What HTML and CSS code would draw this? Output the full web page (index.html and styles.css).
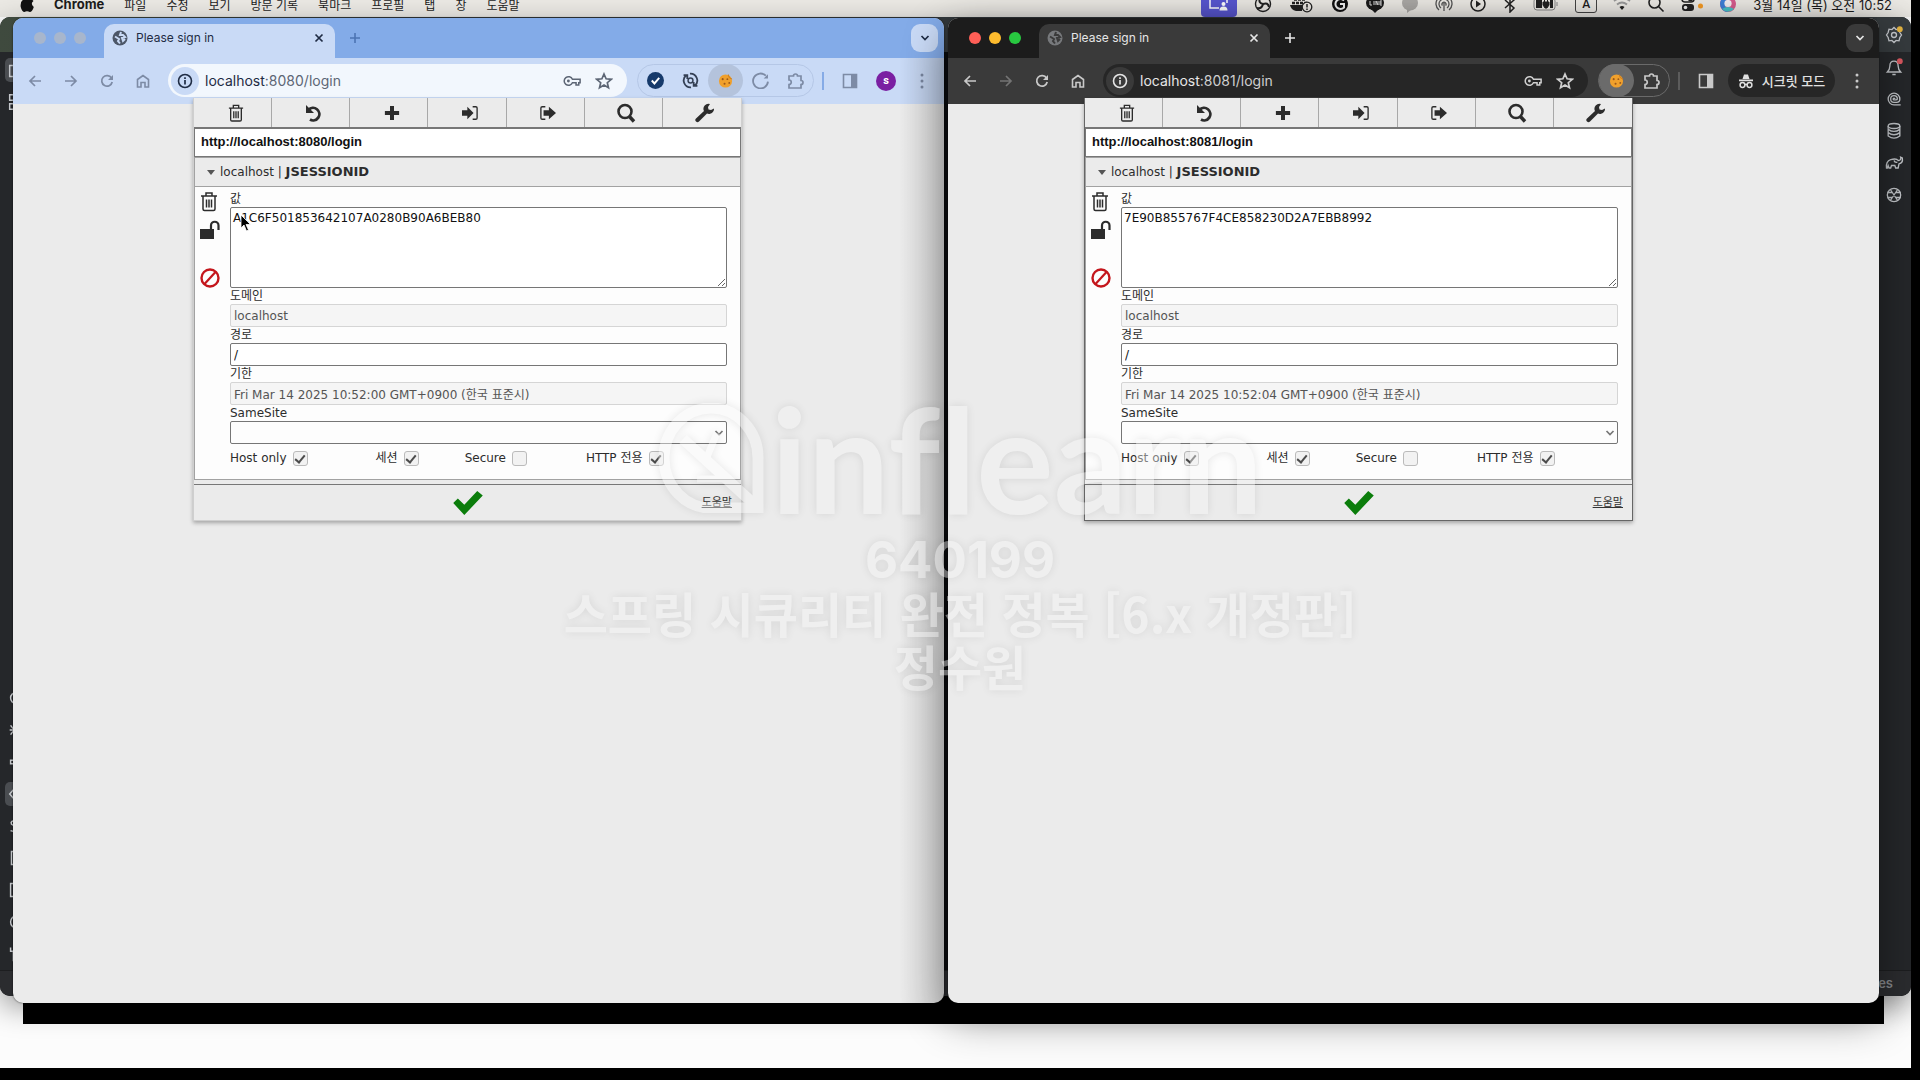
FILE: index.html
```html
<!DOCTYPE html>
<html lang="ko">
<head>
<meta charset="utf-8">
<title>Please sign in</title>
<link rel="stylesheet" href="styles.css">
</head>
<body>
<svg class="sprite" aria-hidden="true">
  <symbol id="i-trash" viewBox="0 0 18 20"><path d="M1 4.500h16M6 4V1.500h6V4M3 5v12.500q0 1.500 1.500 1.500h9q1.500 0 1.500-1.500V5M6.500 8v8M9 8v8M11.500 8v8" fill="none" stroke="currentColor" stroke-width="1.500"/></symbol>
  <symbol id="i-undo" viewBox="0 0 18 18"><path d="M3.500 6A6.200 6.200 0 1 1 5 15.500" fill="none" stroke="currentColor" stroke-width="2.800"/><path d="M1 1v8h8z" fill="currentColor"/></symbol>
  <symbol id="i-plus" viewBox="0 0 18 18"><path d="M9 1v16M1 9h16" stroke="currentColor" stroke-width="4.500"/></symbol>
  <symbol id="i-import" viewBox="0 0 20 18"><path d="M1 6h6V2l7 7-7 7v-4H1z" fill="currentColor"/><path d="M13 2h3.500q1.500 0 1.500 1.500v11q0 1.500-1.500 1.500H13" fill="none" stroke="currentColor" stroke-width="1.500"/></symbol>
  <symbol id="i-export" viewBox="0 0 20 18"><path d="M5 6h6V2l8 7-8 7v-4H5z" fill="currentColor"/><path d="M7 2H3.500Q2 2 2 3.500v11Q2 16 3.500 16H7" fill="none" stroke="currentColor" stroke-width="1.500"/></symbol>
  <symbol id="i-search" viewBox="0 0 20 20"><circle cx="9" cy="8.500" r="6.500" fill="none" stroke="currentColor" stroke-width="2.600"/><path d="m13 13 5 5.500" stroke="currentColor" stroke-width="3.400"/></symbol>
  <symbol id="i-wrench" viewBox="0 0 20 20"><path d="M19 5.500a5 5 0 0 1-7 5L4 18.500a1.800 1.800 0 0 1-3-3l8-7.500a5 5 0 0 1 6-7L13 4l.500 2.500L16 7z" fill="currentColor"/></symbol>
  <symbol id="i-unlock" viewBox="0 0 20 20"><path d="M0 9h14v10H0z" fill="currentColor"/><path d="M11 9V5.500a3.700 3.700 0 0 1 7.500 0V10" fill="none" stroke="currentColor" stroke-width="2.200"/></symbol>
  <symbol id="i-ban" viewBox="0 0 20 20"><circle cx="10" cy="10" r="8.500" fill="none" stroke="#c4161c" stroke-width="2.400"/><path d="M4.500 16 15.500 4" stroke="#c4161c" stroke-width="2.200"/></symbol>
  <symbol id="i-ok" viewBox="0 0 32 26"><path d="M0 13l5-5 7 7L26 0l6 5L12 26z" fill="#0b7d0b"/></symbol>
  <symbol id="i-back" viewBox="0 0 16 16"><path d="M14 8H3M8 3 3 8l5 5" fill="none" stroke="currentColor" stroke-width="1.700"/></symbol>
  <symbol id="i-fwd" viewBox="0 0 16 16"><path d="M2 8h11M8 3l5 5-5 5" fill="none" stroke="currentColor" stroke-width="1.700"/></symbol>
  <symbol id="i-reload" viewBox="0 0 16 16"><path d="M12.500 5A5.300 5.300 0 1 0 13.200 9" fill="none" stroke="currentColor" stroke-width="1.700"/><path d="M14 2v5H9z" fill="currentColor"/></symbol>
  <symbol id="i-home" viewBox="0 0 16 16"><path d="M2.500 6.500 8 2.500l5.500 4V14H10V9.500H6V14H2.500z" fill="none" stroke="currentColor" stroke-width="1.600"/></symbol>
  <symbol id="i-info" viewBox="0 0 16 16"><circle cx="8" cy="8" r="6.500" fill="none" stroke="currentColor" stroke-width="1.600"/><path d="M8 7v4.500M8 4.300v1.600" stroke="currentColor" stroke-width="1.700"/></symbol>
  <symbol id="i-key" viewBox="0 0 20 16"><path d="M10.500 6H19v4h-1.500v2.500h-3V10h-4a4.800 4.800 0 1 1 0-4z" fill="none" stroke="currentColor" stroke-width="1.700"/><circle cx="6" cy="8" r="1.600" fill="currentColor"/></symbol>
  <symbol id="i-star" viewBox="0 0 18 18"><path d="m9 2 2.100 4.800 5.200.500-4 3.400 1.200 5.100L9 13.100l-4.500 2.700 1.200-5.100-4-3.400 5.200-.500z" fill="none" stroke="currentColor" stroke-width="1.700"/></symbol>
  <symbol id="i-globe" viewBox="0 0 16 16"><circle cx="8" cy="8" r="7.500" fill="currentColor"/><path d="M3 6.500 7 9l-1 2 2 2.500M9 2l-1 3h3l2 2-3 1 1 3 2-2" fill="none" stroke="var(--tab)" stroke-width="2"/></symbol>
  <symbol id="i-close" viewBox="0 0 12 12"><path d="m2.500 2.500 7 7M9.500 2.500l-7 7" stroke="currentColor" stroke-width="1.700"/></symbol>
  <symbol id="i-add" viewBox="0 0 12 12"><path d="M6 1v10M1 6h10" stroke="currentColor" stroke-width="1.600"/></symbol>
  <symbol id="i-chev" viewBox="0 0 12 12"><path d="m2.500 4 3.500 3.500L9.500 4" fill="none" stroke="currentColor" stroke-width="1.700"/></symbol>
  <symbol id="i-puzzle" viewBox="0 0 18 18"><path d="M2 4h4.500a2 2 0 0 1 4 0H14v4.500a2 2 0 0 1 0 4V16H2v-3.500a2.200 2.200 0 0 0 0-4.500z" fill="none" stroke="currentColor" stroke-width="1.700"/></symbol>
  <symbol id="i-panel" viewBox="0 0 16 16"><path d="M1.500 1.500h13v13h-13z" fill="none" stroke="currentColor" stroke-width="1.600"/><path d="M9 2h5v12H9z" fill="currentColor"/></symbol>
  <symbol id="i-dots" viewBox="0 0 4 16"><circle cx="2" cy="2" r="1.500" fill="currentColor"/><circle cx="2" cy="8" r="1.500" fill="currentColor"/><circle cx="2" cy="14" r="1.500" fill="currentColor"/></symbol>
  <symbol id="i-cookie" viewBox="0 0 16 16"><circle cx="8" cy="8" r="7" fill="#f0a02c"/><path d="M11 1a5 5 0 0 0 4 5" stroke="#c87a1d" fill="none"/><circle cx="5" cy="6" r="1.100" fill="#9a571a"/><circle cx="10" cy="6" r="1" fill="#9a571a"/><circle cx="7" cy="11" r="1.100" fill="#9a571a"/><circle cx="12" cy="10" r="1" fill="#9a571a"/></symbol>
  <symbol id="i-check" viewBox="0 0 16 16"><circle cx="8" cy="8" r="8" fill="#163a6b"/><path d="m4.500 8 2.500 2.800L11.500 5.500" fill="none" stroke="#fff" stroke-width="1.800"/></symbol>
  <symbol id="i-sync" viewBox="0 0 16 16"><path d="M8.500 14.500A6.500 6.500 0 0 1 4 3M7.500 1.500A6.500 6.500 0 0 1 12 13M1.500 3H5v3.500M14.500 13H11V9.500" fill="none" stroke="currentColor" stroke-width="1.700"/><circle cx="8" cy="8" r="2.300" fill="none" stroke="currentColor" stroke-width="1.400"/></symbol>
  <symbol id="i-arc" viewBox="0 0 16 16"><path d="M13 3.500A7 7 0 1 0 15 9" fill="none" stroke="currentColor" stroke-width="1.700"/><path d="M15 2v4h-4z" fill="currentColor"/></symbol>
  <symbol id="i-spy" viewBox="0 0 16 16"><path d="M4.500 6 6 1.500h4L11.500 6zM1 6.500h14v1.700H1z" fill="currentColor"/><circle cx="4.500" cy="12" r="2.400" fill="none" stroke="currentColor" stroke-width="1.500"/><circle cx="11.500" cy="12" r="2.400" fill="none" stroke="currentColor" stroke-width="1.500"/><path d="M7 11.500h2" stroke="currentColor" stroke-width="1.400"/></symbol>
</svg>

<div class="screen">
<div class="desktop">

  <header class="menubar">
    <nav class="menus">
      <svg class="apple" viewBox="0 0 14 18"><path d="M9.500 0q.200 3-2.700 4Q6.700 1 9.500 0zM7 5q1 0 2.500-.600Q12 4 13.500 6q-3.500 2.500.300 6-1.600 5-4 5-1.300-.700-2.800-.700T4.500 17Q2 17 .700 12 0 5.500 4 4.500 5.500 4.500 7 5z" fill="#111"/></svg>
      <b>Chrome</b><span>파일</span><span>수정</span><span>보기</span><span>방문 기록</span><span>북마크</span><span>프로필</span><span>탭</span><span>창</span><span>도움말</span>
    </nav>
    <div class="status">
      <span class="share"><svg viewBox="0 0 20 16" width="20" height="16"><path d="M1 1h17v6M1 1v11h9" fill="none" stroke="#fff" stroke-width="1.500"/><circle cx="14.500" cy="8" r="2" fill="#fff"/><path d="M10.500 14.500q0-4 4-4t4 4z" fill="#fff"/></svg></span>
      <svg viewBox="0 0 18 18" width="20" height="18"><circle cx="9" cy="9" r="7.500" fill="none" stroke="#222" stroke-width="1.400"/><path d="M9 9Q4 8 6 3M9 9q5-2 6 3M9 9q-1 5-6 4" fill="none" stroke="#222" stroke-width="2"/></svg>
      <svg viewBox="0 0 26 18" width="26" height="18"><path d="M8 1h8M5 4.500h12M3 8h15" stroke="#222" stroke-width="2.600" stroke-dasharray="3 1"/><path d="M1 10h12v6H7q-5-1-6-6z" fill="#222"/><circle cx="18" cy="12" r="4.800" fill="#ebe8e3" stroke="#222" stroke-width="1.300"/><path d="M18 9v3.500m0 1v1.500" stroke="#222" stroke-width="1.500"/></svg>
      <svg viewBox="0 0 18 18" width="18" height="18"><circle cx="9" cy="9" r="8" fill="#111"/><path d="M13 5.500a5 5 0 1 0 0 7V9H9" fill="none" stroke="#eee" stroke-width="2"/></svg>
      <svg viewBox="0 0 20 18" width="20" height="18"><ellipse cx="10" cy="8" rx="9" ry="7.500" fill="#1b1b1b"/><path d="m6 14 4 4 4-4z" fill="#1b1b1b"/><path d="M5 6v4h2M9 6v4m2 0V6l2 4V6m4 0h-2v4h2m-2-2h2" fill="none" stroke="#ddd"/></svg>
      <svg viewBox="0 0 18 18" width="18" height="18"><ellipse cx="9" cy="8" rx="8" ry="7.500" fill="#aaa8a5"/><path d="m6 14 0 4 5-4z" fill="#aaa8a5"/></svg>
      <svg viewBox="0 0 18 18" width="18" height="18" fill="none" stroke="#555" stroke-width="1.300"><path d="M4 15A8 8 0 1 1 14 15M6 13a5 5 0 1 1 6 0M9 8v8M7.500 10.500a2 2 0 1 1 3 0"/></svg>
      <svg viewBox="0 0 18 18" width="18" height="18"><circle cx="9" cy="9" r="7" fill="none" stroke="#222" stroke-width="1.500"/><path d="m7 5.500 5 3.500-5 3.500z" fill="#222"/></svg>
      <svg viewBox="0 0 14 18" width="14" height="18"><path d="m2 5 9 8-4 4V1l4 4-9 8" fill="none" stroke="#222" stroke-width="1.500"/></svg>
      <svg viewBox="0 0 26 18" width="26" height="18"><rect x="1" y="3" width="21" height="12" rx="3" fill="none" stroke="#888"/><path d="M3 5h6v8H3zM17 5h3v8h-3z" fill="#222"/><path d="M10 7h6v3l-2 3h-2l-2-3zM11.500 5v2m3-2v2" fill="#222" stroke="#222"/><path d="M24 7v4" stroke="#888"/></svg>
      <span class="ime">A</span>
      <svg viewBox="0 0 18 18" width="18" height="18" fill="none" stroke="#999" stroke-width="1.800"><path d="M1 6q8-6 16 0M4 9.500q5-4 10 0"/><path d="M6.500 12q2.500-2 5 0L9 15z" fill="#222" stroke="none"/></svg>
      <svg viewBox="0 0 18 18" width="18" height="18" fill="none" stroke="#222" stroke-width="1.600"><circle cx="7.500" cy="7.500" r="5.500"/><path d="m11.500 11.500 5 5"/></svg>
      <svg viewBox="0 0 22 18" width="22" height="18"><rect x="1" y="1" width="12" height="6" rx="3" fill="none" stroke="#222" stroke-width="1.500"/><circle cx="9.500" cy="4" r="2.500" fill="#222"/><rect x="1" y="9" width="12" height="7" rx="3" fill="#222"/><circle cx="4.500" cy="12.500" r="1.800" fill="#eee"/><circle cx="19.500" cy="11" r="2.500" fill="#f59a23"/></svg>
      <svg viewBox="0 0 18 18" width="18" height="18"><circle cx="9" cy="9" r="8" fill="#d65b8d"/><path d="M9 1a8 8 0 0 0 0 16Q4 11 9 1z" fill="#3f7fd8"/><path d="M3 14a8 8 0 0 0 12 0Q9 10 3 14z" fill="#49c3c8"/><circle cx="9" cy="8.500" r="3.600" fill="#f3eef2"/></svg>
      <time>3월 14일 (목) 오전 10:52</time>
    </div>
  </header>

  <div class="stage">
    <div class="terminal"></div>
    <div class="ide">
      <div class="ide-top"></div>
      <div class="ide-mid">
        <div class="rail rail-left">
          <svg class="on" viewBox="0 0 24 24"><path d="M4 7h16v12H4z"/></svg>
          <svg viewBox="0 0 24 24"><path d="M4 4h6v6H4zM4 14h6v6H4z"/></svg>
          <svg class="push" viewBox="0 0 24 24"><circle cx="11" cy="12" r="6"/></svg>
          <svg viewBox="0 0 24 24"><path d="M5 7l8 10M5 17l8-10M4 12h8"/></svg>
          <svg viewBox="0 0 24 24"><path d="M5 10h5v4H5zM10 12h6"/></svg>
          <svg class="on" viewBox="0 0 24 24"><path d="m11 4-7 8 7 8"/></svg>
          <svg viewBox="0 0 24 24"><path d="M12 6q-8 0-6 4 5 3 6 5-1 4-7 2"/></svg>
          <svg viewBox="0 0 24 24"><path d="M6 5h9v14H6z"/></svg>
          <svg viewBox="0 0 24 24"><path d="M5 5h14v14H5zM8 10h4"/></svg>
          <svg viewBox="0 0 24 24"><circle cx="12" cy="12" r="7"/></svg>
          <svg viewBox="0 0 24 24"><path d="M5 5v4h6V5M8 9v11"/></svg>
        </div>
        <div class="rail rail-right">
          <svg viewBox="0 0 24 24"><path d="M12 3l2.500 2.500L18 5l1 4 2 3-2 3-1 4-3.500-.500L12 21l-2.500-2.500L6 19l-1-4-2-3 2-3 1-4 3.500.500z"/><circle cx="12" cy="12" r="3"/><circle cx="19" cy="5" r="3.500" fill="#e3b341" stroke="none"/></svg>
          <svg viewBox="0 0 24 24"><path d="M4 18h16q-3-3-3-7 0-6-5-6t-5 6q0 4-3 7zM10 21h4"/><circle cx="19" cy="5" r="3.500" fill="#db5860" stroke="none"/></svg>
          <svg viewBox="0 0 24 24"><path d="M20 19h-8a7 7 0 1 1 7-7q0 4-4 4h-3a4 4 0 1 1 4-4q0 1-2 1h-2a1 1 0 1 1 1-1"/></svg>
          <svg viewBox="0 0 24 24"><ellipse cx="12" cy="6" rx="7" ry="3"/><path d="M5 6v12q7 5 14 0V6M5 10q7 5 14 0M5 14q7 5 14 0"/></svg>
          <svg viewBox="0 0 24 24"><path d="M3 18q-1-8 5-10 7-2 9 1 4 0 3-4l2 1q1 6-4 7l-1 5h-3l-1-3-4 0-1 3H6l-1-3-1 3zM12 9q1 3 4 2"/></svg>
          <svg viewBox="0 0 24 24"><circle cx="12" cy="12" r="8"/><path d="M4 9h6m4 0h6M4 15h6m4 0h6M8 6l8 12M16 6 8 18"/></svg>
        </div>
      </div>
      <div class="ide-status">es</div>
    </div>

    <main class="windows">

      <section class="window light">
        <div class="tabs">
          <div class="lights"><i></i><i></i><i></i></div>
          <div class="tab"><svg width="16" height="16"><use href="#i-globe"/></svg><span>Please sign in</span><button aria-label="탭 닫기"><svg width="12" height="12"><use href="#i-close"/></svg></button></div>
          <button class="newtab" aria-label="새 탭"><svg width="12" height="12"><use href="#i-add"/></svg></button>
          <button class="drop" aria-label="탭 검색"><svg width="12" height="12"><use href="#i-chev"/></svg></button>
        </div>
        <div class="toolbar">
          <button aria-label="뒤로"><svg width="16" height="16"><use href="#i-back"/></svg></button>
          <button aria-label="앞으로"><svg width="16" height="16"><use href="#i-fwd"/></svg></button>
          <button aria-label="새로고침"><svg width="16" height="16"><use href="#i-reload"/></svg></button>
          <button aria-label="홈"><svg width="16" height="18"><use href="#i-home"/></svg></button>
          <div class="omnibox">
            <span class="site"><svg width="16" height="16"><use href="#i-info"/></svg></span>
            <span class="url">localhost<em>:8080/login</em></span>
            <svg width="18" height="16"><use href="#i-key"/></svg>
            <svg width="18" height="18"><use href="#i-star"/></svg>
          </div>
          <div class="exts">
            <button aria-label="확인"><svg width="17" height="17"><use href="#i-check"/></svg></button>
            <button aria-label="동기화"><svg width="17" height="17"><use href="#i-sync"/></svg></button>
            <button class="active" aria-label="쿠키"><svg width="15" height="16"><use href="#i-cookie"/></svg></button>
            <button class="dim" aria-label="새로고침"><svg width="17" height="17"><use href="#i-arc"/></svg></button>
            <button class="dim" aria-label="확장 프로그램"><svg width="18" height="18"><use href="#i-puzzle"/></svg></button>
          </div>
          <span class="rule"></span>
          <button aria-label="측면 패널"><svg width="16" height="16"><use href="#i-panel"/></svg></button>
          <button aria-label="프로필"><span class="avatar">s</span></button>
          <button aria-label="메뉴"><svg width="4" height="16"><use href="#i-dots"/></svg></button>
        </div>
        <div class="shade"></div>

        <div class="popup">
          <div class="actions">
            <button aria-label="모두 삭제"><svg width="16" height="18"><use href="#i-trash"/></svg></button>
            <button aria-label="초기화"><svg width="18" height="18"><use href="#i-undo"/></svg></button>
            <button aria-label="추가"><svg width="16" height="16"><use href="#i-plus"/></svg></button>
            <button aria-label="가져오기"><svg width="18" height="16"><use href="#i-import"/></svg></button>
            <button aria-label="내보내기"><svg width="18" height="16"><use href="#i-export"/></svg></button>
            <button aria-label="검색"><svg width="20" height="20"><use href="#i-search"/></svg></button>
            <button aria-label="설정"><svg width="20" height="20"><use href="#i-wrench"/></svg></button>
          </div>
          <input class="address" aria-label="URL" value="http://localhost:8080/login">
          <div class="cookie-head"><span class="tri"></span><span>localhost | <b>JSESSIONID</b></span></div>
          <div class="cookie">
            <div class="tools">
              <svg width="18" height="21"><use href="#i-trash"/></svg>
              <svg width="20" height="20"><use href="#i-unlock"/></svg>
              <svg class="ban" width="20" height="20"><use href="#i-ban"/></svg>
            </div>
            <form class="fields">
              <label for="v1">값</label><textarea id="v1" spellcheck="false">A1C6F501853642107A0280B90A6BEB80</textarea>
              <label for="d1">도메인</label><input id="d1" value="localhost" disabled>
              <label for="p1">경로</label><input id="p1" value="/">
              <label for="e1">기한</label><input id="e1" value="Fri Mar 14 2025 10:52:00 GMT+0900 (한국 표준시)" disabled>
              <label for="s1">SameSite</label>
              <div class="select"><select id="s1"><option></option></select><svg width="12" height="12"><use href="#i-chev"/></svg></div>
              <div class="flags">
                <label>Host only<input type="checkbox" checked></label>
                <label>세션<input type="checkbox" checked></label>
                <label>Secure<input type="checkbox"></label>
                <label>HTTP 전용<input type="checkbox" checked></label>
              </div>
            </form>
          </div>
          <footer><button aria-label="저장"><svg width="32" height="24"><use href="#i-ok"/></svg></button><a href="#help">도움말</a></footer>
        </div>
        <svg class="cursor" viewBox="0 0 12 18" width="12" height="18"><path d="M1 1v13l3-3 2.500 6 2-1L6 10.500h4.500z" fill="#000" stroke="#fff" stroke-width=".800"/></svg>
      </section>

      <section class="window dark">
        <div class="tabs">
          <div class="lights"><i></i><i></i><i></i></div>
          <div class="tab"><svg width="16" height="16"><use href="#i-globe"/></svg><span>Please sign in</span><button aria-label="탭 닫기"><svg width="12" height="12"><use href="#i-close"/></svg></button></div>
          <button class="newtab" aria-label="새 탭"><svg width="12" height="12"><use href="#i-add"/></svg></button>
          <button class="drop" aria-label="탭 검색"><svg width="12" height="12"><use href="#i-chev"/></svg></button>
        </div>
        <div class="toolbar">
          <button aria-label="뒤로"><svg width="16" height="16"><use href="#i-back"/></svg></button>
          <button class="dim" aria-label="앞으로"><svg width="16" height="16"><use href="#i-fwd"/></svg></button>
          <button aria-label="새로고침"><svg width="16" height="16"><use href="#i-reload"/></svg></button>
          <button aria-label="홈"><svg width="16" height="18"><use href="#i-home"/></svg></button>
          <div class="omnibox">
            <span class="site"><svg width="16" height="16"><use href="#i-info"/></svg></span>
            <span class="url">localhost<em>:8081/login</em></span>
            <svg width="18" height="16"><use href="#i-key"/></svg>
            <svg width="18" height="18"><use href="#i-star"/></svg>
          </div>
          <div class="exts">
            <button class="active" aria-label="쿠키"><svg width="15" height="16"><use href="#i-cookie"/></svg></button>
            <button aria-label="확장 프로그램"><svg width="18" height="18"><use href="#i-puzzle"/></svg></button>
          </div>
          <span class="rule"></span>
          <button aria-label="측면 패널"><svg width="16" height="16"><use href="#i-panel"/></svg></button>
          <button class="incognito"><svg width="16" height="16"><use href="#i-spy"/></svg>시크릿 모드</button>
          <button aria-label="메뉴"><svg width="4" height="16"><use href="#i-dots"/></svg></button>
        </div>

        <div class="popup">
          <div class="actions">
            <button aria-label="모두 삭제"><svg width="16" height="18"><use href="#i-trash"/></svg></button>
            <button aria-label="초기화"><svg width="18" height="18"><use href="#i-undo"/></svg></button>
            <button aria-label="추가"><svg width="16" height="16"><use href="#i-plus"/></svg></button>
            <button aria-label="가져오기"><svg width="18" height="16"><use href="#i-import"/></svg></button>
            <button aria-label="내보내기"><svg width="18" height="16"><use href="#i-export"/></svg></button>
            <button aria-label="검색"><svg width="20" height="20"><use href="#i-search"/></svg></button>
            <button aria-label="설정"><svg width="20" height="20"><use href="#i-wrench"/></svg></button>
          </div>
          <input class="address" aria-label="URL" value="http://localhost:8081/login">
          <div class="cookie-head"><span class="tri"></span><span>localhost | <b>JSESSIONID</b></span></div>
          <div class="cookie">
            <div class="tools">
              <svg width="18" height="21"><use href="#i-trash"/></svg>
              <svg width="20" height="20"><use href="#i-unlock"/></svg>
              <svg class="ban" width="20" height="20"><use href="#i-ban"/></svg>
            </div>
            <form class="fields">
              <label for="v2">값</label><textarea id="v2" spellcheck="false">7E90B855767F4CE858230D2A7EBB8992</textarea>
              <label for="d2">도메인</label><input id="d2" value="localhost" disabled>
              <label for="p2">경로</label><input id="p2" value="/">
              <label for="e2">기한</label><input id="e2" value="Fri Mar 14 2025 10:52:04 GMT+0900 (한국 표준시)" disabled>
              <label for="s2">SameSite</label>
              <div class="select"><select id="s2"><option></option></select><svg width="12" height="12"><use href="#i-chev"/></svg></div>
              <div class="flags">
                <label>Host only<input type="checkbox" checked></label>
                <label>세션<input type="checkbox" checked></label>
                <label>Secure<input type="checkbox"></label>
                <label>HTTP 전용<input type="checkbox" checked></label>
              </div>
            </form>
          </div>
          <footer><button aria-label="저장"><svg width="32" height="24"><use href="#i-ok"/></svg></button><a href="#help">도움말</a></footer>
        </div>
      </section>
    </main>
  </div>
</div>

<div class="watermark">
  <div class="brand">
    <svg viewBox="0 0 114 110" width="114" height="110"><path d="M101 105H55A47 50 0 1 1 101 55z" fill="none" stroke="#f6f6f6" stroke-width="11"/><path d="M26 36 98 102" stroke="#f6f6f6" stroke-width="11"/><path d="M60 30 50 54M40 76h34" stroke="#f6f6f6" stroke-width="7"/></svg>
    <span>inflearn</span>
  </div>
  <p>640199</p>
  <p>스프링 시큐리티 완전 정복 [6.x 개정판]</p>
  <p>정수원</p>
</div>
</div>
</body>
</html>
```
FILE: styles.css
```css
* { box-sizing: border-box; }
body { margin: 0; background: #000; font-family: Roboto, "Noto Sans CJK KR", sans-serif; }
button { border: 0; background: none; padding: 0; color: inherit; font: inherit; display: flex; align-items: center; justify-content: center; }
svg { display: block; flex: none; }
.sprite { position: absolute; width: 0; height: 0; }

.screen { position: relative; height: 100vh; padding: 0 9px 12px 0; overflow: hidden; }
.desktop { height: 100%; display: flex; flex-direction: column; background: #fcfcfc; overflow: hidden; }

/* macOS menu bar, partly above the visible area */
.menubar { display: flex; justify-content: space-between; align-items: flex-end; height: 17px; overflow: hidden; background: #ebe9e4; color: #1c1c1c; font-size: 12px; padding: 0 19px 0 20px; }
.menus, .status { display: flex; align-items: center; height: 26px; flex: none; white-space: nowrap; }
.menus { gap: 20px; font-family: "Noto Sans CJK KR", sans-serif; }
.menus b { font: 700 13px Inter, sans-serif; }
.apple { width: 14px; height: 18px; }
.status { gap: 16px; }
.share { display: flex; align-items: center; justify-content: center; width: 36px; height: 26px; background: #5856d0; border-radius: 4px; }
.ime { width: 22px; height: 18px; border: 1px solid #444; border-radius: 3px; text-align: center; line-height: 17px; font-weight: 500; }
.status time { font: 13px Inter, "Noto Sans CJK KR", sans-serif; }

.stage { position: relative; flex: 1; min-height: 0; }
.terminal { position: absolute; left: 23px; right: 27px; bottom: 44px; height: 80px; background: #000; }

/* editor behind the browsers */
.ide { position: absolute; inset: 0 0 72px; display: flex; flex-direction: column; background: #0b0c0e; border-radius: 10px; overflow: hidden; box-shadow: 0 10px 30px rgba(0,0,0,.4); color: #c3c6ca; }
.ide-top { height: 35px; background: linear-gradient(90deg, #3f4a3e, #33383b 20%); flex: none; }
.ide-mid { flex: 1; display: flex; justify-content: space-between; min-height: 0; }
.rail { display: flex; flex-direction: column; width: 34px; background: #25272a; padding: 6px 5px; gap: 8px; }
.rail svg { width: 24px; height: 24px; padding: 1px; fill: none; stroke: currentColor; stroke-width: 1.6; border-radius: 5px; }
.rail-left { padding-bottom: 4px; }
.rail-left .on { background: #4a4d51; }
.rail-left .push { margin-top: auto; }
.rail-right { margin-top: -35px; padding-top: 6px; background: linear-gradient(#363b3e 35px, #25272a 35px); align-items: center; }
.rail-right svg { padding: 2px; }
.ide-status { height: 26px; flex: none; background: #2b2c2f; border-top: 1px solid #1d1e20; color: #85878a; font: 600 13px/25px Inter, sans-serif; text-align: right; padding-right: 18px; }

.windows { position: absolute; inset: 1px 32px 65px 13px; display: grid; grid-template-columns: 1fr 1fr; gap: 4px; }
.window { position: relative; min-width: 0; display: flex; flex-direction: column; background: #ebebeb; border-radius: 10px; }
.light { --frame: #83abe8; --tab: #c9daf6; --omni: #f2f7fd; --ring: #c9daf6; --ink: #1f2c44; --icon: #7d8ba5; --sub: #5d6675; --line: #b5c7e6; --act: #b4c3dc; --dropbg: #c9daf6; box-shadow: 0 0 2px rgba(0,0,0,.7); }
.dark { --frame: #1c1c1c; --tab: #3a3a3a; --omni: #262626; --ring: #3a3a3a; --ink: #e6e6e6; --icon: #c9c9c9; --sub: #cfcfcf; --line: #6a6a6a; --act: #6b6b6b; --dropbg: #3a3a3a; box-shadow: 0 14px 44px rgba(0,0,0,.45), 0 0 1px #000; }
.shade { position: absolute; inset: 40px 0 0 auto; width: 44px; border-radius: 0 0 10px 0; background: linear-gradient(90deg, transparent, rgba(0,0,0,.12)); pointer-events: none; }

.tabs { display: flex; align-items: center; height: 40px; background: var(--frame); border-radius: 10px 10px 0 0; padding: 0 6px 1px 21px; color: var(--ink); flex: none; }
.lights { display: flex; gap: 8px; }
.lights i { width: 12px; height: 12px; border-radius: 50%; background: #a8b6cc; }
.dark .lights i:nth-child(1) { background: #ff5f57; }
.dark .lights i:nth-child(2) { background: #febc2e; }
.dark .lights i:nth-child(3) { background: #28c840; }
.tab { align-self: flex-end; display: flex; align-items: center; gap: 8px; width: 231px; height: 34px; margin: 0 0 -1px 18px; padding: 0 7px 7px 8px; background: var(--tab); border-radius: 10px 10px 0 0; font: 12px Inter, sans-serif; }
.tab span { flex: 1; }
.tab > svg { color: #4d5768; }
.dark .tab > svg { color: #77797c; }
.tab button { width: 18px; height: 18px; }
.newtab { width: 20px; height: 20px; margin-left: 10px; }
.light .newtab { color: #4c74b3; }
.drop { width: 27px; height: 28px; margin-left: auto; border-radius: 9px; background: var(--dropbg); }

.toolbar { display: flex; align-items: center; height: 46px; background: var(--tab); color: var(--icon); padding: 0 4px 1px; flex: none; }
.toolbar button { width: 36px; height: 33px; flex: none; }
.light .toolbar > .exts button { color: #344055; }
.toolbar .dim, .light .toolbar > .exts .dim { color: #7d8ba5; }
.dark .toolbar .dim { color: #747474; }
.omnibox { flex: 1; min-width: 0; display: flex; align-items: center; gap: 14px; height: 33px; margin-left: 7px; padding: 0 14px 0 3px; border-radius: 17px; background: var(--omni); color: var(--sub); }
.site { display: flex; align-items: center; justify-content: center; width: 28px; height: 28px; border-radius: 50%; background: var(--ring); color: var(--ink); }
.url { flex: 1; margin-left: -8px; font: 14px Inter, sans-serif; color: var(--ink); }
.url em { font-style: normal; color: var(--sub); }
.exts { display: flex; height: 33px; margin: 0 8px 0 10px; border: 1px solid var(--line); border-radius: 17px; align-items: center; }
.toolbar .exts button { width: 35px; }
.exts .active { border-radius: 17px; background: var(--act); }
.rule { width: 2px; height: 18px; background: #86abe6; margin-right: 8px; }
.dark .rule { background: #5c5c5c; }
.avatar { width: 20px; height: 20px; border-radius: 50%; background: #7a1fa2; color: #fff; font: 700 11px/19px Roboto, sans-serif; text-align: center; }
.toolbar .incognito { width: 107px; gap: 8px; border-radius: 17px; background: #262626; color: #e0e0e0; font: 500 13px "Noto Sans CJK KR", sans-serif; margin: 0 4px; white-space: nowrap; }

/* cookie editor popup */
.popup { position: absolute; top: 80px; right: 202px; width: 549px; display: flex; flex-direction: column; background: #ebebeb; border: 1px solid #cfcfcf; border-top: 0; box-shadow: 0 2px 4px rgba(0,0,0,.3); color: #2c2c2c; font: 12px/16px "DejaVu Sans", "Noto Sans CJK KR", sans-serif; }
.dark .popup { right: 246px; border-color: #666; }
.actions { display: grid; grid-template-columns: repeat(7, 1fr); height: 29px; }
.actions button { border-right: 1px solid #a8a8a8; padding-left: 6px; }
.actions button:last-child { border-right: 0; }
.address { display: block; width: 100%; height: 30px; border: 1px solid #777; border-top-width: 2px; padding: 0 6px 3px; background: #fff; color: #111; font: 700 13px "Liberation Sans", sans-serif; }
.cookie-head { display: flex; align-items: center; gap: 5px; height: 30px; border: 1px solid #a2a2a2; padding: 0 0 0 12px; white-space: pre; }
.cookie-head b { font-size: 13px; }
.tri { border: 4px solid transparent; border-top: 5px solid #555; border-bottom: 0; }
.cookie { display: flex; background: #fdfdfd; border: solid #a2a2a2; border-width: 0 1px 1px; padding: 4px 13px 13px 5px; }
.tools { display: flex; flex-direction: column; gap: 8px; width: 30px; }
.tools .ban { margin-top: 20px; }
.fields { flex: 1; min-width: 0; display: flex; flex-direction: column; font-size: 12px; }
.fields label { height: 16px; white-space: nowrap; }
.fields textarea, .fields > input, .fields select { display: block; width: 100%; margin: 0; border: 1px solid #767676; border-radius: 2px; background: #fff; color: #111; font: inherit; }
.fields textarea { height: 81px; padding: 2px; resize: vertical; }
.fields > input { height: 23px; padding: 0 3px; }
.fields > input:disabled { background: #f5f5f5; border-color: #d5d5d5; color: #545454; }
.select { position: relative; }
.fields select { height: 23px; appearance: none; background: transparent; }
.select svg { position: absolute; right: 2px; top: 6px; color: #777; pointer-events: none; }
.flags { display: flex; gap: 54px; margin-top: 6px; }
.flags label { display: flex; align-items: center; gap: 6px; }
.flags label:nth-child(1) { margin-right: 14px; }
.flags label:nth-child(2) { margin-right: -8px; }
.flags label:nth-child(3) { margin-right: 5px; }
.flags input { appearance: none; width: 15px; height: 15px; margin: 0; border: 1px solid #bbb; border-radius: 3px; background: #f2f2f2; display: grid; place-items: center; }
.flags input:checked::before { content: ""; width: 4px; height: 8px; border: solid #4c4c4c; border-width: 0 2px 2px 0; transform: rotate(40deg); }
.popup footer { display: grid; grid-template-columns: 1fr auto 1fr; align-items: center; height: 36px; margin-top: 4px; border-top: 1px solid #777; padding: 0 9px 0 9px; }
.popup footer button { grid-column: 2; }
.popup footer a { justify-self: end; color: #333; font-size: 11px; }
.cursor { position: absolute; left: 227px; top: 196px; }

/* course watermark */
.watermark { position: absolute; inset: 403px 0 auto; opacity: .42; pointer-events: none; color: #f6f6f6; text-align: center; filter: drop-shadow(0 0 5px rgba(0,0,0,.22)); }
.brand { display: flex; justify-content: center; align-items: flex-end; height: 110px; }
.brand span { font: 700 145px/110px Lato, sans-serif; font-variant-ligatures: none; }
.watermark p { margin: 0; font: 700 48px/53px "Noto Sans CJK KR", sans-serif; }
.watermark .brand + p { margin-top: 20px; font: 700 51px/53px Inter, sans-serif; }
```
